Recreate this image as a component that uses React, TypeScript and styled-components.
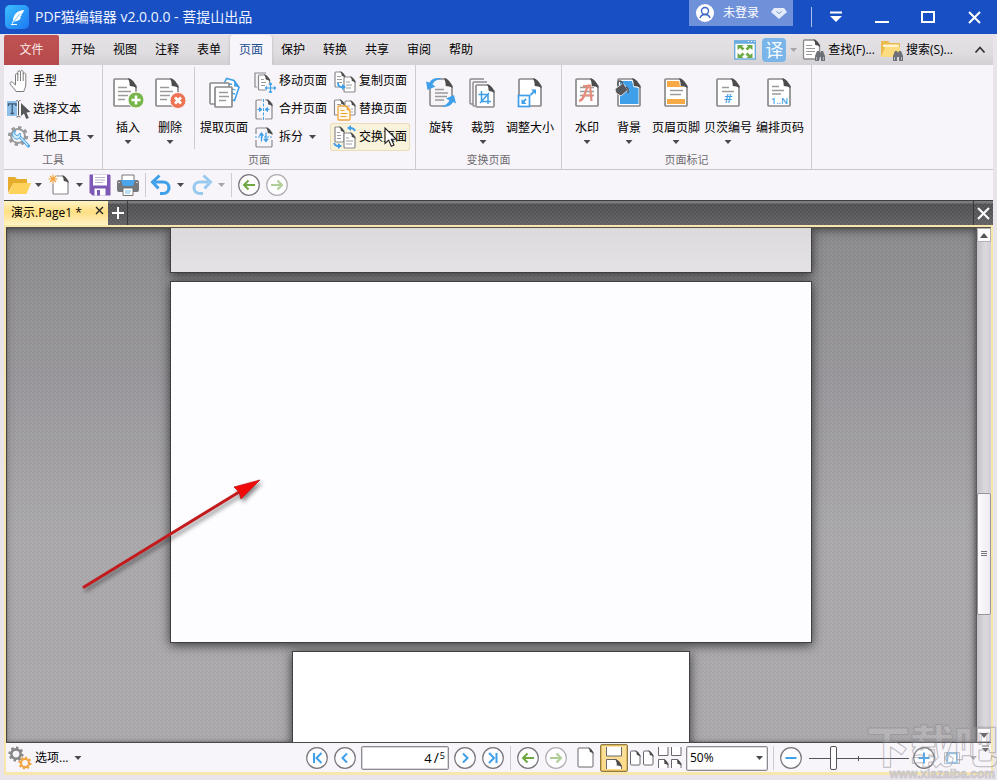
import React from "react";
import styled, { createGlobalStyle, css } from "styled-components";

const BLUE = "#3f9fe8";
const GREY = "#8a898b";
const INK = "#4c4c4c";

const GlobalStyle = createGlobalStyle`
  * { box-sizing: border-box; }
  html, body, #root { height: 100%; }
  body {
    margin: 0;
    overflow: hidden;
    background: #e8e4ea;
    color: #000;
    font: 12px/16px "Open Sans", "Noto Sans CJK SC", sans-serif;
  }
  button, input, select { font: inherit; color: inherit; }
  button { border: 0; padding: 0; margin: 0; background: none; cursor: default; white-space: nowrap; }
  svg { display: block; flex: none; }
`;

/* ---------- window frame ---------- */

const Window = styled.div`
  display: flex;
  flex-direction: column;
  height: 100vh;
  position: relative;
  overflow: hidden;
`;

const TitleBar = styled.header`
  display: flex;
  align-items: center;
  flex: none;
  height: 34px;
  padding-left: 5px;
  gap: 6px;
  background: #1850c4;
  color: #eef3ff;
`;

const Title = styled.h1`
  margin: 0;
  flex: 1;
  font-size: 14px;
  font-weight: 400;
  line-height: 24px;
  white-space: nowrap;
`;

const UserButton = styled.button`
  align-self: flex-start;
  display: flex;
  align-items: center;
  justify-content: center;
  gap: 8px;
  width: 104px;
  height: 26px;
  margin-right: 12px;
  background: #6f91da;
  color: #fff;
`;

const UserGem = styled.span`
  margin-left: 4px;
`;

const WindowControls = styled.div`
  display: flex;
  align-items: center;
  &::before {
    content: "";
    width: 1px;
    height: 20px;
    margin-right: 1px;
    background: #a9bfec;
  }
`;

const WindowButton = styled.button`
  display: grid;
  place-items: center;
  width: 46px;
  height: 34px;
`;

const Body = styled.div`
  display: flex;
  flex-direction: column;
  flex: 1;
  min-height: 0;
  margin: 1px 4px 5px;
`;

/* ---------- menu tabs ---------- */

const MenuBar = styled.nav`
  display: flex;
  align-items: stretch;
  flex: none;
  height: 30px;
  background: linear-gradient(#e4e2e4, #dfdde0 60%, #d2d0d4);
`;

const FileButton = styled.button`
  width: 55px;
  margin-right: 3px;
  border-radius: 2px 2px 0 0;
  background: linear-gradient(#c05252, #b54a4c);
  color: #fbe9e9;
`;

const MenuTab = styled.button<{ $active?: boolean }>`
  width: 42px;
  ${(p) =>
    p.$active &&
    css`
      background: #f8f5fa;
      color: #1c5192;
      border-radius: 3px 3px 0 0;
      box-shadow: 0 0 3px #b5b3b8;
      clip-path: inset(0 -4px 0 -4px);
    `}
`;

const MenuTools = styled.div`
  display: flex;
  align-items: center;
  margin-left: auto;
  padding-right: 7px;
  gap: 5px;
`;

const ToolLink = styled.button`
  display: flex;
  align-items: center;
  gap: 2px;
`;

const CollapseButton = styled.button`
  margin-left: 16px;
`;

const TranslateBadge = styled.span`
  display: grid;
  place-items: center;
  width: 24px;
  height: 24px;
  border-radius: 4px;
  background: #79b5e9;
  color: #f4faff;
  font-size: 18px;
  line-height: 24px;
`;

/* ---------- ribbon ---------- */

const Ribbon = styled.div`
  display: flex;
  flex: none;
  height: 105px;
  background: #f8f5fa;
  border-bottom: 1px solid #c9c6cc;
`;

const Group = styled.section`
  display: flex;
  flex-direction: column;
  padding: 2px 0 0;
  border-right: 1px solid #cdcad0;
`;

const GroupBody = styled.div<{ $flush?: boolean }>`
  display: flex;
  height: 85px;
  padding: ${(p) => (p.$flush ? "0" : "0 5px 0 4px")};
`;

const GroupLabel = styled.h2`
  margin: 0;
  font-size: 11px;
  font-weight: 400;
  line-height: 16px;
  text-align: center;
  color: #6e6c70;
`;

const Column = styled.div<{ $width: number }>`
  display: flex;
  flex-direction: column;
  width: ${(p) => p.$width}px;
`;

const SmallButton = styled.button<{ $hover?: boolean }>`
  position: relative;
  display: flex;
  align-items: center;
  gap: 2px;
  height: 28px;
  padding-left: 3px;
  ${(p) =>
    p.$hover &&
    css`
      background: #f9f3dc;
      box-shadow: inset 0 0 0 1px #e9ddba;
      border-radius: 3px;
    `}
`;

const BigButton = styled.button<{ $wide?: boolean }>`
  display: flex;
  flex-direction: column;
  align-items: center;
  width: ${(p) => (p.$wide ? 52 : 42)}px;
  padding-top: 10px;
`;

const BigLabel = styled.span`
  margin: 11px 0 4px;
`;

const Divider = styled.span<{ $tall?: boolean }>`
  flex: none;
  width: 1px;
  height: ${(p) => (p.$tall ? "82px" : "24px")};
  margin: 0 3px;
  background: #cdcad0;
`;

const Caret = styled.span<{ $muted?: boolean; $gap?: number }>`
  flex: none;
  width: 7px;
  height: 4px;
  margin-left: ${(p) => p.$gap ?? 0}px;
  background: ${(p) => (p.$muted ? "#a9a6ab" : "#4a484b")};
  clip-path: polygon(0 0, 100% 0, 50% 100%);
`;

const Pointer = styled.span`
  position: absolute;
  left: 54px;
  top: 4px;
  z-index: 2;
`;

/* ---------- quick access ---------- */

const QuickBar = styled.div`
  display: flex;
  align-items: center;
  flex: none;
  height: 30px;
  padding-left: 3px;
  background: #f8f5fa;
`;

const QuickButton = styled.button<{ $drop?: "wide" | "narrow" }>`
  display: flex;
  align-items: center;
  justify-content: ${(p) => (p.$drop ? "flex-start" : "center")};
  gap: 4px;
  width: ${(p) => (p.$drop === "wide" ? 41 : p.$drop === "narrow" ? 38 : 28)}px;
  height: 28px;
`;

/* ---------- document tabs ---------- */

const TabStrip = styled.div`
  display: flex;
  flex: none;
  height: 25px;
  border-top: 1px solid #3e3d40;
  background:
    radial-gradient(circle at 1px 1px, #8080804d 1px, #0000 1px) 0 0 / 4px 4px,
    radial-gradient(circle at 3px 3px, #8080804d 1px, #0000 1px) 0 0 / 4px 4px,
    linear-gradient(#7b7a7d 0 2px, #4c4b4e 3px, #535255 50%, #605f62);
`;

const DocTab = styled.div`
  display: flex;
  align-items: center;
  justify-content: space-between;
  width: 104px;
  padding: 0 4px 0 7px;
  background: linear-gradient(#fff3c4, #ffdf83 45%, #ffe9a6 75%, #fff4c4);
`;

const StripButton = styled.button<{ $last?: boolean }>`
  display: grid;
  place-items: center;
  width: 20px;
  margin-left: ${(p) => (p.$last ? "auto" : "0")};
  border: solid #39383a;
  border-width: ${(p) => (p.$last ? "0 0 0 1px" : "0 1px 0 0")};
`;

const TabClose = styled.button`
  align-self: flex-start;
  padding-top: 5px;
`;

/* ---------- workspace ---------- */

const Workspace = styled.main`
  display: flex;
  flex-direction: column;
  flex: 1;
  min-height: 0;
  border: 2px solid #f7e7ac;
  border-bottom-width: 3px;
`;

const Viewport = styled.div`
  display: flex;
  flex: 1;
  min-height: 0;
  border-top: 1px solid #55504a;
  border-bottom: 1px solid #4a494c;
`;

const Canvas = styled.div`
  position: relative;
  display: flex;
  flex-direction: column;
  align-items: center;
  gap: 8px;
  flex: 1;
  overflow: hidden;
  box-shadow: inset 1px 0 1px #3d3c3f, inset 0 5px 12px -4px #403f42, inset -2px 0 6px -2px #4a494c;
  background:
    radial-gradient(circle at 1px 1px, #ffffff1c 1px, #0000 2px) 0 0 / 4px 4px,
    radial-gradient(circle at 3px 3px, #ffffff1c 1px, #0000 2px) 0 0 / 4px 4px,
    linear-gradient(#828184, #918f93 30%, #a3a1a4 60%, #a4a2a5);
`;

const Page = styled.article<{ $kind: "previous" | "current" | "next" }>`
  flex: none;
  border: 1px solid #3f3e41;
  box-shadow: 0 2px 10px #1d1c1fd0;
  ${(p) =>
    p.$kind === "previous" &&
    css`
      width: calc(66% + 1px);
      height: 45px;
      border-top: 0;
      background: linear-gradient(#dcdadd, #e4e2e5);
    `}
  ${(p) =>
    p.$kind === "current" &&
    css`
      width: calc(66% + 1px);
      aspect-ratio: 641 / 362;
      background: #fdfcfe;
    `}
  ${(p) =>
    p.$kind === "next" &&
    css`
      width: 41%;
      aspect-ratio: 1 / 1;
      background: #fff;
    `}
`;

const Annotation = styled.svg`
  position: absolute;
  left: 70px;
  top: 243px;
`;

const ScrollBar = styled.div`
  display: flex;
  flex-direction: column;
  width: 15px;
  border-left: 1px solid #5b5a5d;
  background: linear-gradient(90deg, #c2bfc5, #dddadf 60%, #cfccd2);
`;

const ScrollArrow = styled.button`
  display: grid;
  place-items: center;
  height: 14px;
  border: 1px solid #b4b1b6;
  background: #fdfbfe;
`;

const ScrollTrack = styled.div`
  flex: 1;
  display: grid;
  grid-template-rows: 251fr 122fr 113fr;
`;

const ScrollThumb = styled.div`
  grid-row: 2;
  display: grid;
  place-items: center;
  border: 1px solid #98959b;
  border-radius: 2px;
  background: linear-gradient(90deg, #fdfbfe, #efecf1);
`;

/* ---------- status bar ---------- */

const StatusBar = styled.footer`
  display: flex;
  align-items: center;
  flex: none;
  height: 29px;
  padding-top: 1px;
  background: #f8f5fa;
`;

const OptionsButton = styled.button`
  display: flex;
  align-items: center;
  gap: 3px;
  margin: 0 auto 0 2px;
`;

const RoundButton = styled.button`
  display: grid;
  place-items: center;
  width: 28px;
  height: 28px;
`;

const PageField = styled.label`
  display: flex;
  align-items: center;
  width: 88px;
  height: 24px;
  margin: 0 2px;
  padding-right: 3px;
  border: 1px solid #8e8b90;
  border-radius: 2px;
  background: #fff;
  box-shadow: inset 0 0 0 1px #d9d6db;
`;

const PageInput = styled.input`
  flex: 1;
  width: 10px;
  min-width: 0;
  border: 0;
  padding: 0;
  outline: 0;
  background: none;
  text-align: right;
  font-size: 13px;
`;

const PageTotal = styled.span`
  display: flex;
  align-items: center;
  font-size: 14px;
  padding-left: 2px;
  small { font-size: 9px; line-height: 12px; align-self: flex-start; padding-left: 1px; }
`;

const ViewGroup = styled.div`
  display: flex;
  margin: 0 2px;
`;

const ViewButton = styled.button<{ $active?: boolean }>`
  display: grid;
  place-items: center;
  width: 28px;
  height: 28px;
  ${(p) =>
    p.$active &&
    css`
      border: 1px solid #8f7a48;
      border-radius: 2px;
      background: linear-gradient(#fbe3a0, #fdd985);
      box-shadow: inset 0 0 0 1px #e0b95c;
    `}
`;

const ZoomField = styled.label`
  display: flex;
  align-items: center;
  position: relative;
  width: 82px;
  height: 25px;
  margin-right: 2px;
  border: 1px solid #8e8b90;
  border-radius: 2px;
  background: #fff;
  box-shadow: inset 0 0 0 1px #dfdce1;
`;

const ZoomSelect = styled.select`
  flex: 1;
  height: 100%;
  appearance: none;
  border: 0;
  outline: 0;
  padding: 0 0 0 3px;
  background: none;
`;

const ZoomCaret = styled(Caret)`
  position: absolute;
  right: 4px;
`;

const ZoomSlider = styled.input`
  appearance: none;
  width: 100px;
  height: 24px;
  margin: 0 1px 0 4px;
  background:
    linear-gradient(#555358, #555358) center / 100% 1px no-repeat,
    linear-gradient(#555358, #555358) 49% center / 1px 5px no-repeat;
  &::-webkit-slider-thumb {
    appearance: none;
    width: 7px;
    height: 24px;
    border: 1px solid #555358;
    border-radius: 2px;
    background: #fff;
  }
`;

const CornerButton = styled.button`
  align-self: flex-start;
  padding: 1px 1px 0 4px;
`;

/* ---------- watermark ---------- */

const Watermark = styled.div`
  position: absolute;
  right: -1px;
  bottom: 0;
  display: flex;
  flex-direction: column;
  align-items: flex-end;
  pointer-events: none;
  font-weight: 700;
  white-space: nowrap;
  b {
    font-size: 44px;
    line-height: 44px;
    color: #ffffff20;
    -webkit-text-stroke: 1px #8d8a8f90;
  }
  span {
    font: 700 12px/12px "Liberation Sans", sans-serif;
    color: #d8d5da;
    -webkit-text-stroke: 1px #b3b0b570;
    padding-right: 3px;
  }
`;

/* ---------- icons ---------- */

const Svg = ({ w = 24, h = w, children }: { w?: number; h?: number; children: React.ReactNode }) => (
  <svg width={w} height={h} viewBox={`0 0 ${w} ${h}`} fill="none" aria-hidden="true">
    {children}
  </svg>
);

/* The dark curl at the upper-right corner (right, top) of a sheet. */
const Curl = ({ right, top, c, color = INK }: { right: number; top: number; c: number; color?: string }) => (
  <path
    d={`M${right - c - 1} ${top - 0.7}Q${right - c * 0.3} ${top} ${right + 0.8} ${top + c + 2}Q${right - c * 0.4} ${top + c} ${right - c + 0.8} ${top + c}Q${right - c + 0.8} ${top + c * 0.4} ${right - c - 1} ${top - 0.7}Z`}
    fill={color}
  />
);

const Sheet = ({ x, y, w, h, c = 5, stroke = GREY, sw = 1.3, fill = "#fff", corner = INK }: {
  x: number; y: number; w: number; h: number; c?: number; stroke?: string; sw?: number; fill?: string; corner?: string;
}) => (
  <g>
    <path
      d={`M${x + 1} ${y}H${x + w - c}L${x + w} ${y + c}V${y + h - 1}q0 1-1 1H${x + 1}q-1 0-1-1V${y + 1}q0-1 1-1Z`}
      fill={fill} stroke={stroke} strokeWidth={sw}
    />
    <Curl right={x + w} top={y} c={c} color={corner} />
  </g>
);

const Lines = ({ d, stroke = "#9b9b9b", sw = 1.5 }: { d: string; stroke?: string; sw?: number }) => (
  <path d={d} stroke={stroke} strokeWidth={sw} />
);

const BigSheet = ({ x = 5, fill }: { x?: number; fill?: string }) => (
  <Sheet x={x} y={2} w={22} h={27} c={7} sw={1.7} fill={fill} />
);

const Gear = ({ x, y, r, color }: { x: number; y: number; r: number; color: string }) => (
  <g stroke={color}>
    <circle cx={x} cy={y} r={r * 0.62} strokeWidth={r * 0.34} />
    <circle cx={x} cy={y} r={r * 0.86} strokeWidth={r * 0.3} pathLength={16} strokeDasharray="1 1" />
  </g>
);

const Binoculars = ({ x, y }: { x: number; y: number }) => (
  <g transform={`translate(${x} ${y})`}>
    <path d="M3 0h2l1 2 1-2h2l2 5v5H7V6H5v4H1V5Z" fill="#6d7076" />
    <path d="M2.500 6v3M9.500 6v3" stroke="#aeb3ba" />
  </g>
);

const Logo = () => (
  <svg width="24" height="24" viewBox="0 0 24 24" aria-hidden="true">
    <defs>
      <linearGradient id="logoFill" x1="0" y1="0" x2="1" y2="1">
        <stop stopColor="#3cc0ff" />
        <stop offset="1" stopColor="#1c78f2" />
      </linearGradient>
    </defs>
    <rect width="24" height="24" rx="5" fill="url(#logoFill)" />
    <path d="M19 5c-6 .5-11 4-11 11l-1.500 2.300 1 .4L9 16.500c6-.5 6.500-3 7-4.500l-1.500.2 2.500-2-1.200-.1C17.500 8.500 18.500 7 19 5Z" fill="#fff" />
    <path d="M15 8.500 8 17.500" stroke="#5eb4f8" strokeWidth=".8" />
    <path d="M6 19.500h6" stroke="#fff" />
  </svg>
);

const InsertIcon = () => (
  <Svg w={32}>
    <BigSheet x={2} />
    <Lines d="M6 10.500h9M6 14.500h13M6 18.500h10M6 22.500h7" />
    <circle cx="24" cy="23" r="8" fill="#77b54a" stroke="#f8f5fa" />
    <path d="M24 18.500v9M19.500 23h9" stroke="#fff" strokeWidth="2.600" />
  </Svg>
);

const DeleteIcon = () => (
  <Svg w={32}>
    <BigSheet x={2} />
    <Lines d="M6 10.500h9M6 14.500h13M6 18.500h10M6 22.500h7" />
    <circle cx="24" cy="23.500" r="8" fill="#ee7353" stroke="#f8f5fa" />
    <path d="m21 20.500 6 6M27 20.500l-6 6" stroke="#fff" strokeWidth="2.800" />
  </Svg>
);

const ExtractIcon = () => (
  <Svg w={32}>
    <path d="M16 7 18.500 1.500 26 3.500l5 7-4.500 13-5-1.500" fill="#fff" stroke={BLUE} strokeWidth="1.600" />
    <path d="M25.500 2.500 32 11q-3-2-6-1.500 1-3-.5-7Z" fill={BLUE} />
    <path d="M20 6.500l4 1M21 11l6.500 2M23 16l4 1" stroke={BLUE} strokeWidth="1.300" />
    <path d="M7 27H3q-1 0-1-1V7q0-1 1-1h17q1 0 1 1v3" fill="#fff" stroke={GREY} strokeWidth="1.600" />
    <rect x="7" y="10" width="17" height="20" rx="1" fill="#fff" stroke={GREY} strokeWidth="1.700" />
    <Lines d="M11 15.500h9M11 19.500h10M11 23.500h7" />
  </Svg>
);

const RotateIcon = () => (
  <Svg w={32}>
    <path d="M5 11v16q0 2 2 2h13M13 2h8l6 7v13" stroke={GREY} strokeWidth="1.600" />
    <Curl right={27} top={2} c={7} />
    <Lines d="M10 12.500h9M10 16h13M10 19.500h12M10 23h9" />
    <path d="M17 1.500C11 0 6 2 4.500 5.500L1 4.500 2.500 13l8-3.500-3-2C8.500 4.500 12 2.500 17 1.500ZM17 29.500c5 1 9.500-1 11-4.500l3 1.500L29 18l-8 3.500 3.500 2C23 26.500 20 28.500 17 29.500Z" fill={BLUE} />
  </Svg>
);

const CropIcon = () => (
  <Svg w={32}>
    <path d="M6 27H4q-1 0-1-1V3q0-1 1-1h13M8 29H7q-1 0-1-1V6q0-1 1-1h13" stroke={GREY} strokeWidth="1.400" />
    <Sheet x={9} y={8} w={18} h={22} c={6} sw={1.600} />
    <path d="M14.500 14v10.500H24M11.500 17.500h9.500V27M13 26l9-10" stroke={BLUE} strokeWidth="1.500" />
  </Svg>
);

const ResizeIcon = () => (
  <Svg w={32}>
    <BigSheet />
    <rect x="4.500" y="18.500" width="11" height="11" fill="#fff" stroke={BLUE} strokeWidth="1.700" />
    <path d="m12 22-3 3M16.500 18l4-4" stroke={BLUE} strokeWidth="1.800" />
    <path d="M7.500 22v5h5ZM17 12.500h5v5Z" fill={BLUE} />
  </Svg>
);

const WatermarkIcon = () => (
  <Svg w={32}>
    <BigSheet />
    <Lines d="M9 10.500h14M9 14.500h14M9 18.500h14" />
    <path d="M8 24q3.500-1 5-5l4-10.500h2L20.500 24M11 18.500h11M12 9h7" stroke="#e58c7c" strokeWidth="2.200" />
  </Svg>
);

const BackgroundIcon = () => (
  <Svg w={32}>
    <BigSheet />
    <path d="M7 4h12l1.500 6 5 1v16H7Z" fill={BLUE} />
    <path d="m2 12 8-6 5 7-7 6-5-3Z" fill="#56575a" stroke="#f8f5fa" strokeWidth=".8" />
    <path d="M5 9C4 3 9 2 10 8M13 10q3 1 2 6" stroke="#56575a" strokeWidth="1.400" />
  </Svg>
);

const HeaderFooterIcon = () => (
  <Svg w={32}>
    <BigSheet />
    <path d="M7 4h12l1 5h3v1H7ZM7 22h18v5H7Z" fill="#f6a945" />
    <Lines d="M10 13.500h13M10 17.500h11" />
  </Svg>
);

const IconText = styled.text`
  font-family: "Open Sans", sans-serif;
  font-weight: 600;
  fill: ${BLUE};
`;

const BatesIcon = () => (
  <Svg w={32}>
    <BigSheet />
    <Lines d="M10 10.500h7M10 14.500h12" />
    <IconText x="12" y="26" fontSize="13">#</IconText>
  </Svg>
);

const NumberIcon = () => (
  <Svg w={32}>
    <BigSheet x={4} />
    <Lines d="M8 9.500h7M8 13.500h12M8 17h9" />
    <IconText x="7" y="27" fontSize="9">1..N</IconText>
  </Svg>
);

const HandIcon = () => (
  <Svg>
    <path d="M9 22.500C7.500 19.500 4 17 3 14.500c-.3-1.500 1.500-2.200 2.800-1L8.500 16V5.800c0-1.700 2.300-1.700 2.300 0V3.200c0-1.900 2.700-1.900 2.700 0v-.4c0-1.700 2.700-1.700 2.700.2v2.200c0-1.700 2.600-1.500 2.600.2V15c0 3.500-1.500 5-2 7.500Z" fill="#fff" stroke="#7b7b7b" />
    <path d="M10.800 5v7M13.500 3v9M16.200 5v7" stroke="#7b7b7b" />
  </Svg>
);

const SelectTextIcon = () => (
  <Svg>
    <path d="M0 4h10v15H0Z" fill="#8fc0ea" />
    <path d="M1.500 9V6.800h7.500V9M5.200 7v9.500M3.500 16.500H7" stroke="#3c5873" strokeWidth="1.300" />
    <path d="M9.500 3.500q1.500 0 2 1 .5-1 2-1M11.500 4.500v14M9.500 20q1.500 0 2-1 .5 1 2 1" stroke="#555" />
    <path d="M14 6v13l3-2.500 2.300 5.500 2.500-1-2.300-5.500 4-.5Z" fill="#56575a" />
  </Svg>
);

const OtherToolsIcon = () => (
  <Svg>
    <Gear x={11} y={11} r={10} color="#9a999b" />
    <circle cx="11" cy="11" r="6" fill="#f8f5fa" />
    <path d="m12 11 9.500 10" stroke={BLUE} strokeWidth="3" strokeLinecap="round" />
    <path d="m13 12 8 8.500" stroke="#d8ecfb" strokeWidth="1.200" />
    <path d="M8.500 5.500c-4 1.500-4 7 .5 8.500 3.500.5 5.500-2.500 4-6l-2.500 3-3-2Z" fill="#d8ecfb" stroke={BLUE} />
  </Svg>
);

const MoveIcon = () => (
  <Svg>
    <path d="M4 18H2V4h11" stroke={GREY} strokeWidth="1.200" />
    <Sheet x={5.500} y={6} w={11} h={15} c={4.500} sw={1.200} />
    <Lines d="M8 10.500h3M8 13.500h5M8 16.500h4" sw={1} />
    <circle cx="17.500" cy="19" r="5" fill="#f8f5fa" />
    <path d="M17.500 14v10M12.500 19h10M16 15.500l1.500-1.500 1.500 1.500M16 22.500l1.500 1.500 1.500-1.500M14 17.500 12.500 19l1.500 1.500M21 17.500l1.500 1.500-1.500 1.500" stroke={BLUE} strokeWidth="1.200" />
  </Svg>
);

const MergeIcon = () => (
  <Svg>
    <path d="M9 3H4q-1 0-1 1v17q0 1 1 1h5M12 3h3l4 4v14q0 1-1 1h-6" stroke={GREY} strokeWidth="1.200" />
    <Curl right={19} top={3} c={4.500} />
    <path d="M10.500 2v21" stroke={BLUE} strokeDasharray="3 1.500" />
    <path d="M4.500 12.500H7M16.500 12.500H14M6.500 10.500l2.500 2-2.500 2ZM14.500 10.500l-2.500 2 2.500 2Z" stroke={BLUE} fill={BLUE} />
  </Svg>
);

const SplitIcon = () => (
  <Svg>
    <path d="M3 9V4q0-1 1-1h10l5 5v1M3 15v6q0 1 1 1h14q1 0 1-1v-6" stroke={GREY} strokeWidth="1.200" />
    <Curl right={19} top={3} c={5} />
    <path d="M2 12h18" stroke={BLUE} strokeDasharray="2 1" />
    <path d="M8.500 16.500V9M7 10l1.500-2L10 10ZM13 7.500V15M11.500 14.500l1.500 2 1.500-2Z" stroke={BLUE} strokeWidth="1.300" fill={BLUE} />
  </Svg>
);

const CopyIcon = () => (
  <Svg>
    <Sheet x={2} y={3} w={10} h={15} c={4} sw={1.200} />
    <Lines d="M4 7.500h4M4 10.500h5M4 13.500h5" sw={1} />
    <Sheet x={11} y={8} w={11} h={15} c={4} sw={1.200} />
    <Lines d="M13 13h4M13 16h6M13 19h5" sw={1} />
    <path d="M5 14q0 4 4 4" stroke={BLUE} strokeWidth="1.800" />
    <path d="M9 15l4 3-4 3Z" fill={BLUE} />
  </Svg>
);

const ReplaceIcon = () => (
  <Svg>
    <Sheet x={1.500} y={3} w={10} h={15} c={4} sw={1.200} />
    <Sheet x={12} y={4} w={10} h={14} c={4} sw={1.200} />
    <Lines d="M4 7.500h4M14 9h3M18 12h2M18 15h2" sw={1} />
    <Sheet x={5} y={9} w={12} h={14} c={4} stroke="#eea63b" corner="#eea63b" fill="#fff8e8" />
    <Lines d="M7.500 13.500h4M7.500 16.500h7M7.500 19.500h6" sw={1} stroke="#eea63b" />
  </Svg>
);

const SwapIcon = () => (
  <Svg>
    <Sheet x={2} y={2} w={9} h={15} c={4} sw={1.200} />
    <Lines d="M4 7.500h3M4 10.500h4M4 13.500h4" sw={1} />
    <Sheet x={11} y={8} w={11} h={15} c={4} sw={1.200} />
    <Lines d="M13 13h3M13 16h7M13 19h6" sw={1} />
    <path d="M22 6q-1-3-5-3M1 18q1 3 4 3" stroke={BLUE} strokeWidth="1.800" />
    <path d="M18 0l-4 3 4 3ZM5 18l4 3-4 3Z" fill={BLUE} />
  </Svg>
);

const CursorIcon = () => (
  <Svg w={14} h={21}>
    <path d="M1 1v15.500l3.700-3.300 2.600 6 2.700-1.200-2.600-5.700h5Z" fill="#fff" stroke="#222" strokeWidth="1.100" />
  </Svg>
);

const OpenIcon = () => (
  <Svg>
    <path d="M1 4h7l2 2h10v5H6L1 20Z" fill="#e6ad2d" />
    <path d="M6 10h18l-4.500 11H1.500Z" fill="#fdd35c" />
  </Svg>
);

const NewIcon = () => (
  <Svg>
    <Sheet x={5} y={3} w={15} h={18} c={5} sw={1.200} />
    <circle cx="5" cy="6" r="4.500" fill="#f8f5fa" />
    <path d="M5 1.500v9M.5 6h9M2 3l6 6M8 3 2 9" stroke="#f2a33c" strokeWidth="1.100" />
  </Svg>
);

const SaveIcon = () => (
  <Svg>
    <path d="M1.500 1.500h20q1 0 1 1v20h-18l-3-3Z" fill="#7d58b4" />
    <path d="M5 1.500h14v11H5ZM6.500 15.500h11v7h-11Z" fill="#fff" />
    <path d="M7 4.500h10M7 7h10M7 9.500h8" stroke="#bbb3c8" />
    <path d="M9 17h3v5.500H9Z" fill="#7d58b4" />
  </Svg>
);

const PrintIcon = () => (
  <Svg>
    <path d="M6 2h12v6H6Z" fill="#fff" stroke="#777" />
    <rect x="1" y="7" width="22" height="12" rx="2" fill="#75777c" />
    <path d="M5 7h14l-2 6H7Z" fill="#4aa5ec" />
    <path d="M2 9.500h2M20 9.500h2" stroke="#c5c5c5" />
    <path d="M7 15h10v7.500H7Z" fill="#fff" stroke="#777" />
    <path d="M9 18h6M9 20h5" stroke="#7bbcf0" />
  </Svg>
);

const UndoIcon = ({ redo }: { redo?: boolean }) => (
  <Svg>
    <g transform={redo ? "matrix(-1 0 0 1 24 0)" : undefined} opacity={redo ? 0.5 : 1}>
      <path d="M6 9h8c8 0 8 11.500 0 11.500h-3" stroke={BLUE} strokeWidth="3.200" />
      <path d="M10.500 2.500 3.500 9l6 6.500" stroke={BLUE} strokeWidth="3" />
    </g>
  </Svg>
);

const circlePaths = {
  first: "M8 6v10M15.500 6 10.500 11l5 5",
  prev: "M13 6.500 8.500 11l4.500 4.500",
  next: "M9 6.500 13.500 11 9 15.500",
  last: "M14.500 6v10M7 6l5 5-5 5",
  back: "M17 11H6.500M10.500 6.500 6 11l4.500 4.500",
  forward: "M5 11h10.500M11.500 6.500 16 11l-4.500 4.500",
  minus: "M5.500 11h11",
  plus: "M5.500 11h11M11 5.500v11",
};

const CircleIcon = ({ kind, color = BLUE, muted }: { kind: keyof typeof circlePaths; color?: string; muted?: boolean }) => (
  <Svg w={22}>
    <circle cx="11" cy="11" r="10.300" fill="#fdfcfe" stroke={muted ? "#b0aeb2" : "#777579"} strokeWidth="1.200" />
    <path d={circlePaths[kind]} stroke={color} strokeWidth="2" opacity={muted ? 0.55 : 1} />
  </Svg>
);

const FullScreenIcon = () => (
  <Svg w={24}>
    <rect x="1.700" y="3" width="20.600" height="18" fill="#fff" stroke="#6bacdf" strokeWidth="1.400" />
    <path d="M1 2.300h22v3.500H1Z" fill="#6bacdf" />
    <path d="M15 3.500h1M18 3.500h1M21 3.500h1" stroke="#fff" />
    <path d="M4.500 7h6L9 8.500l2.500 2-2 2-2.500-2.500L4.500 12ZM19.500 7h-6L15 8.500l-2.500 2 2 2 2.500-2.500 2.500 2ZM4.500 20h6L9 18.500l2.500-2-2-2L7 17l-2.500-2ZM19.500 20h-6l1.500-1.500-2.500-2 2-2L17 17l2.500-2Z" fill="#6aaa45" />
  </Svg>
);

const FindIcon = () => (
  <Svg>
    <Sheet x={1.500} y={2} w={16} h={19} c={5} />
    <Lines d="M4 7.500h6M4 10.500h9M4 13.500h9M4 16.500h6" sw={1} />
    <Binoculars x={12} y={13} />
  </Svg>
);

const SearchIcon = () => (
  <Svg>
    <path d="M1 3h7l2 2h10v14H1Z" fill="#e9bb4c" />
    <path d="M3 6.500h16V9H3Z" fill="#fff3cf" />
    <path d="M5 9h15v10H1Z" fill="#fddb7f" />
    <Binoculars x={12} y={13} />
  </Svg>
);

const CrossIcon = ({ size, sw, color = "#fff" }: { size: number; sw: number; color?: string }) => (
  <Svg w={size}>
    <path d={`M1 1 ${size - 1} ${size - 1}M${size - 1} 1 1 ${size - 1}`} stroke={color} strokeWidth={sw} />
  </Svg>
);

const OnePage = ({ x, y, w, h }: { x: number; y: number; w: number; h: number }) => (
  <Sheet x={x} y={y} w={w} h={h} c={4} sw={1} stroke="#6b696d" />
);

/* ---------- data ---------- */

const menuItems = ["开始", "视图", "注释", "表单", "页面", "保护", "转换", "共享", "审阅", "帮助"];

const Big = ({ icon, label, drop, wide }: { icon: React.ReactNode; label: string; drop?: boolean; wide?: boolean }) => (
  <BigButton type="button" $wide={wide}>
    {icon}
    <BigLabel>{label}</BigLabel>
    {drop && <Caret />}
  </BigButton>
);

const Small = ({ icon, label, drop }: { icon: React.ReactNode; label: string; drop?: boolean }) => (
  <SmallButton type="button">
    {icon}
    {label}
    {drop && <Caret $gap={4} />}
  </SmallButton>
);

const Round = ({ label, ...icon }: { label: string; kind: keyof typeof circlePaths; color?: string; muted?: boolean }) => (
  <RoundButton type="button" aria-label={label}>
    <CircleIcon {...icon} />
  </RoundButton>
);

export default function App() {
  return (
    <Window>
      <GlobalStyle />
      <TitleBar>
        <Logo />
        <Title>PDF猫编辑器 v2.0.0.0 - 菩提山出品</Title>
        <UserButton type="button">
          <Svg w={20}>
            <circle cx="10" cy="10" r="9" fill="#fff" />
            <circle cx="10" cy="8" r="3.500" stroke="#3b65c4" strokeWidth="1.400" />
            <path d="M5 15q1-3.500 5-3.500t5 3.500" stroke="#3b65c4" strokeWidth="1.400" />
          </Svg>
          未登录
          <UserGem>
            <Svg w={16} h={12}>
              <path d="M3 1h10l3 4-8 7-8-7Z" fill="#e4ebfb" />
              <path d="m5.500 4.500 2.500 2 2.500-2" stroke="#7893d2" />
            </Svg>
          </UserGem>
        </UserButton>
        <WindowControls>
          <WindowButton type="button" aria-label="菜单">
            <Svg w={14} h={12}>
              <path d="M1 1.500h12" stroke="#fff" strokeWidth="2" />
              <path d="M1 5h12l-6 6Z" fill="#fff" />
            </Svg>
          </WindowButton>
          <WindowButton type="button" aria-label="最小化">
            <Svg w={14} h={12}><path d="M0 11h14" stroke="#fff" strokeWidth="2" /></Svg>
          </WindowButton>
          <WindowButton type="button" aria-label="最大化">
            <Svg w={14} h={12}><path d="M1 1h12v10H1Z" stroke="#fff" strokeWidth="2" /></Svg>
          </WindowButton>
          <WindowButton type="button" aria-label="关闭"><CrossIcon size={13} sw={2} /></WindowButton>
        </WindowControls>
      </TitleBar>

      <Body>
        <MenuBar>
          <FileButton type="button">文件</FileButton>
          {menuItems.map((m) => (
            <MenuTab key={m} type="button" $active={m === "页面"}>{m}</MenuTab>
          ))}
          <MenuTools>
            <ToolLink type="button" aria-label="全屏"><FullScreenIcon /></ToolLink>
            <ToolLink type="button">
              <TranslateBadge>译</TranslateBadge>
              <Caret $muted $gap={2} />
            </ToolLink>
            <ToolLink type="button"><FindIcon />查找(F)...</ToolLink>
            <ToolLink type="button"><SearchIcon />搜索(S)...</ToolLink>
            <CollapseButton type="button" aria-label="折叠功能区">
              <Svg w={12} h={8}><path d="m1.500 6.500 4.500-5 4.500 5" stroke="#333" strokeWidth="1.800" /></Svg>
            </CollapseButton>
          </MenuTools>
        </MenuBar>

        <Ribbon>
          <Group>
            <GroupBody $flush>
              <Column $width={98}>
                <Small icon={<HandIcon />} label="手型" />
                <Small icon={<SelectTextIcon />} label="选择文本" />
                <Small icon={<OtherToolsIcon />} label="其他工具" drop />
              </Column>
            </GroupBody>
            <GroupLabel>工具</GroupLabel>
          </Group>
          <Group>
            <GroupBody>
              <Big icon={<InsertIcon />} label="插入" drop />
              <Big icon={<DeleteIcon />} label="删除" drop />
              <Divider $tall />
              <Big icon={<ExtractIcon />} label="提取页面" wide />
              <Column $width={80}>
                <Small icon={<MoveIcon />} label="移动页面" />
                <Small icon={<MergeIcon />} label="合并页面" />
                <Small icon={<SplitIcon />} label="拆分" drop />
              </Column>
              <Column $width={80}>
                <Small icon={<CopyIcon />} label="复制页面" />
                <Small icon={<ReplaceIcon />} label="替换页面" />
                <SmallButton type="button" $hover>
                  <SwapIcon />
                  交换页面
                  <Pointer><CursorIcon /></Pointer>
                </SmallButton>
              </Column>
            </GroupBody>
            <GroupLabel>页面</GroupLabel>
          </Group>
          <Group>
            <GroupBody>
              <Big icon={<RotateIcon />} label="旋转" />
              <Big icon={<CropIcon />} label="裁剪" drop />
              <Big icon={<ResizeIcon />} label="调整大小" wide />
            </GroupBody>
            <GroupLabel>变换页面</GroupLabel>
          </Group>
          <Group>
            <GroupBody>
              <Big icon={<WatermarkIcon />} label="水印" drop />
              <Big icon={<BackgroundIcon />} label="背景" drop />
              <Big icon={<HeaderFooterIcon />} label="页眉页脚" drop wide />
              <Big icon={<BatesIcon />} label="贝茨编号" drop wide />
              <Big icon={<NumberIcon />} label="编排页码" wide />
            </GroupBody>
            <GroupLabel>页面标记</GroupLabel>
          </Group>
        </Ribbon>

        <QuickBar>
          <QuickButton type="button" $drop="wide" aria-label="打开"><OpenIcon /><Caret /></QuickButton>
          <QuickButton type="button" $drop="narrow" aria-label="新建"><NewIcon /><Caret /></QuickButton>
          <QuickButton type="button" aria-label="保存"><SaveIcon /></QuickButton>
          <QuickButton type="button" aria-label="打印"><PrintIcon /></QuickButton>
          <Divider />
          <QuickButton type="button" $drop="wide" aria-label="撤销"><UndoIcon /><Caret /></QuickButton>
          <QuickButton type="button" $drop="narrow" aria-label="重做"><UndoIcon redo /><Caret $muted /></QuickButton>
          <Divider />
          <Round label="后退" kind="back" color="#6fa843" />
          <Round label="前进" kind="forward" color="#6fa843" muted />
        </QuickBar>

        <TabStrip>
          <DocTab>
            <span>演示.Page1 *</span>
            <TabClose type="button" aria-label="关闭标签"><CrossIcon size={9} sw={1.3} color="#222" /></TabClose>
          </DocTab>
          <StripButton type="button" aria-label="新标签">
            <Svg w={12}><path d="M6 0v12M0 6h12" stroke="#fff" strokeWidth="2" /></Svg>
          </StripButton>
          <StripButton type="button" $last aria-label="关闭文档"><CrossIcon size={13} sw={2} /></StripButton>
        </TabStrip>

        <Workspace>
          <Viewport>
            <Canvas>
              <Page $kind="previous" />
              <Page $kind="current" />
              <Page $kind="next" />
              <Annotation width="210" height="140" viewBox="0 0 210 140" aria-hidden="true">
                <g style={{ filter: "drop-shadow(2px 3px 2px #0007)" }}>
                  <path d="M8 116 168 18" stroke="#c31a1d" strokeWidth="3" strokeLinecap="round" />
                  <path d="M184 9 158 16l5 5 2 7Z" fill="#f00a0a" stroke="#c31a1d" strokeWidth=".8" />
                </g>
              </Annotation>
            </Canvas>
            <ScrollBar>
              <ScrollArrow type="button" aria-label="向上滚动">
                <Svg w={8} h={5}><path d="m0 5 4-5 4 5Z" fill="#555" /></Svg>
              </ScrollArrow>
              <ScrollTrack>
                <ScrollThumb>
                  <Svg w={6} h={6}><path d="M0 .5h6M0 2.500h6M0 4.500h6" stroke="#777" /></Svg>
                </ScrollThumb>
              </ScrollTrack>
              <ScrollArrow type="button" aria-label="向下滚动">
                <Svg w={8} h={5}><path d="m0 0 4 5 4-5Z" fill="#555" /></Svg>
              </ScrollArrow>
            </ScrollBar>
          </Viewport>

          <StatusBar>
            <OptionsButton type="button">
              <Svg>
                <Gear x={8} y={8} r={7.500} color="#858585" />
                <Gear x={17} y={17} r={6.500} color="#f1a544" />
              </Svg>
              选项...
              <Caret $gap={3} />
            </OptionsButton>
            <Round label="第一页" kind="first" />
            <Round label="上一页" kind="prev" />
            <PageField>
              <PageInput aria-label="页码" defaultValue="4" />
              <PageTotal>/<small>5</small></PageTotal>
            </PageField>
            <Round label="下一页" kind="next" />
            <Round label="最后一页" kind="last" />
            <Divider />
            <Round label="后退" kind="back" color="#6fa843" />
            <Round label="前进" kind="forward" color="#6fa843" muted />
            <ViewGroup>
              <ViewButton type="button" aria-label="单页">
                <Svg><OnePage x={4} y={2} w={15} h={19} /></Svg>
              </ViewButton>
              <ViewButton type="button" $active aria-label="连续">
                <Svg>
                  <path d="M4.500 1v9h15V1" fill="#fff" stroke="#6b696d" />
                  <path d="M4.500 23V13.500H14l5.500 6V23" fill="#fff" stroke="#6b696d" />
                  <path d="M13 13q5 1 7 8-3-2-5.500-1.500 1-3-1.500-6.500Z" fill={INK} />
                </Svg>
              </ViewButton>
              <ViewButton type="button" aria-label="双页">
                <Svg><OnePage x={0.5} y={5} w={9.500} h={14} /><OnePage x={13.500} y={5} w={9.500} h={14} /></Svg>
              </ViewButton>
              <ViewButton type="button" aria-label="双页连续">
                <Svg>
                  <path d="M.5 1v8.500H10V1M13.500 1v8.500H23V1M.5 22v-8.500h6l3.500 4V22M13.500 22v-8.500h6l3.500 4V22" fill="#fff" stroke="#6b696d" />
                  <path d="M6 13q3 1 4.500 6.500-2-2-4-1.500ZM19 13q3 1 4.500 6.500-2-2-4-1.500Z" fill={INK} />
                </Svg>
              </ViewButton>
            </ViewGroup>
            <ZoomField>
              <ZoomSelect aria-label="缩放" defaultValue="50%">
                <option>50%</option>
                <option>100%</option>
              </ZoomSelect>
              <ZoomCaret />
            </ZoomField>
            <Divider />
            <Round label="缩小" kind="minus" />
            <ZoomSlider type="range" aria-label="缩放比例" min="0" max="100" defaultValue="23" />
            <Round label="放大" kind="plus" />
            <ViewButton type="button" aria-label="适应宽度">
              <Svg w={18} h={14}>
                <path d="M1.500 1.500h15v11h-15Z" stroke="#b9b6bb" />
                <path d="M4 2.500h10v9H4Z" fill="#fff" stroke="#8cc4ee" strokeWidth="1.600" />
              </Svg>
            </ViewButton>
            <Caret $muted $gap={4} />
            <CornerButton type="button" aria-label="下一页">
              <Svg w={9} h={8}><path d="M1 1h7" stroke="#555" /><path d="m1 3 3.500 4L8 3Z" fill="#555" /></Svg>
            </CornerButton>
          </StatusBar>
        </Workspace>
      </Body>
      <Watermark>
        <b>下载吧</b>
        <span>www.xiazaiba.com</span>
      </Watermark>
    </Window>
  );
}
